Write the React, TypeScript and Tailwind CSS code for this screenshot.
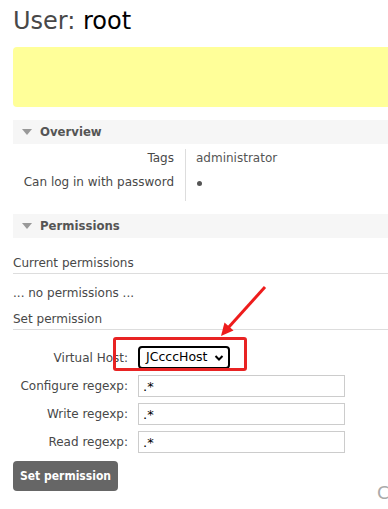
export default function App() {
  return (
    <main className="relative h-[509px] w-[388px] overflow-hidden bg-white pl-[13px] font-['DejaVu_Sans',Verdana,sans-serif] text-[12px] text-[#484848]">
      <h1 className="pt-[6px] text-[24px] leading-[30px] text-[#484848]">
        User: <span className="text-black">root</span>
      </h1>

      <div className="mt-[11px] h-[60px] w-[400px] rounded-[4px] bg-[#ffff99]" />

      <section className="mt-[13px]">
        <div className="flex h-[24px] w-[400px] items-center gap-[8px] bg-[#f6f6f6] pl-[9px]">
          <Triangle />
          <h2 className="font-['DejaVu_Sans_Condensed',sans-serif] text-[13px] font-bold text-[#555]">
            Overview
          </h2>
        </div>
        <div className="flex pt-[5px]">
          <div className="flex w-[172px] flex-col items-end gap-[8px] pr-[11px] pt-[1px] leading-[16px]">
            <span>Tags</span>
            <span>Can log in with password</span>
          </div>
          <div className="h-[52px] w-px bg-[#ddd]" />
          <div className="flex flex-col gap-[8px] pl-[10px] pt-[1px] leading-[16px] text-[#555]">
            <span>administrator</span>
            <span className="flex h-[16px] items-center pl-[1px]">
              <span className="mt-[3px] h-[5px] w-[5px] rounded-full bg-[#555]" />
            </span>
          </div>
        </div>
      </section>

      <section className="mt-[13px]">
        <div className="flex h-[24px] w-[400px] items-center gap-[8px] bg-[#f6f6f6] pl-[9px]">
          <Triangle />
          <h2 className="font-['DejaVu_Sans_Condensed',sans-serif] text-[13px] font-bold text-[#555]">
            Permissions
          </h2>
        </div>

        <h3 className="mt-[17px] w-[400px] border-b border-[#ddd] pb-[2px] leading-[16px]">
          Current permissions
        </h3>
        <p className="mt-[11px] leading-[16px]">... no permissions ...</p>
        <h3 className="mt-[10px] w-[400px] border-b border-[#ddd] pb-[2px] leading-[16px]">
          Set permission
        </h3>

        <div className="mt-[16px] grid grid-cols-[115px_1fr] items-center gap-x-[10px] gap-y-[6px]">
          <label className="pt-[1px] text-right">Virtual Host:</label>
          <div className="relative h-[23px]">
            <div className="flex h-[23px] w-[92px] items-center justify-between rounded-[4px] border-2 border-black pl-[6px] pr-[4px] text-[12.5px] text-black">
              JCcccHost
              <svg width="10" height="8" viewBox="0 0 10 8">
                <path d="M1.5 2l3.5 3.5L8.5 2" fill="none" stroke="#000" strokeWidth="2" />
              </svg>
            </div>
            <div className="absolute -left-[25px] -top-[9px] h-[34px] w-[134px] rounded-[3px] border-[3px] border-[#e82323]" />
          </div>

          <label className="text-right">Configure regexp:</label>
          <input
            readOnly
            value=".*"
            className="h-[22px] w-[207px] border border-[#ccc] px-[4px] text-[13px] text-black outline-none"
          />
          <label className="text-right">Write regexp:</label>
          <input
            readOnly
            value=".*"
            className="h-[22px] w-[207px] border border-[#ccc] px-[4px] text-[13px] text-black outline-none"
          />
          <label className="text-right">Read regexp:</label>
          <input
            readOnly
            value=".*"
            className="h-[22px] w-[207px] border border-[#ccc] px-[4px] text-[13px] text-black outline-none"
          />
        </div>

        <button className="mt-[8px] h-[30px] rounded-[4px] bg-[#666] px-[7px] font-['DejaVu_Sans_Condensed',sans-serif] text-[12px] font-bold text-white">
          Set permission
        </button>
      </section>

      <span className="absolute left-[377px] top-[482px] text-[18px] leading-[22px] text-[#aaa]">C</span>

      <svg
        className="absolute left-0 top-0"
        width="388"
        height="509"
        viewBox="0 0 388 509"
      >
        <line x1="265" y1="287" x2="228" y2="328" stroke="#ee1c1c" strokeWidth="3" />
        <path d="M221 336l3.5-13.5l9 8z" fill="#ee1c1c" />
      </svg>
    </main>
  );
}

function Triangle() {
  return (
    <svg width="10" height="7" viewBox="0 0 10 7">
      <path d="M0 0h10L5 6z" fill="#999" />
    </svg>
  );
}
